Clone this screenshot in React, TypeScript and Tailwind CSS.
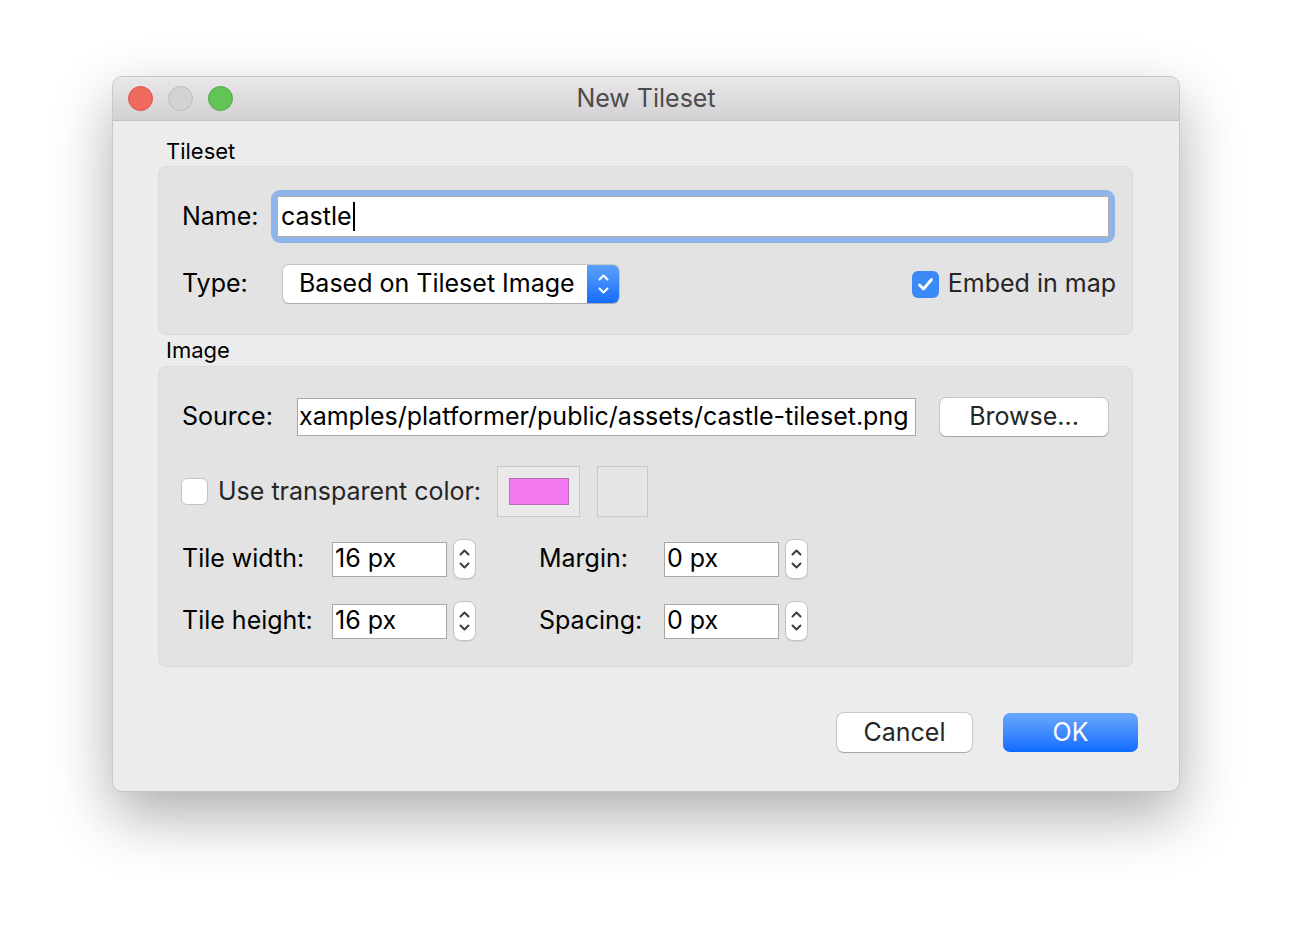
import React from "react";

const Chevrons = ({ color = "#ffffff" }: { color?: string }) => (
    <div className="flex flex-col items-center gap-[6px]">
        <svg width="11" height="7" viewBox="0 0 11 7">
            <path d="M1.5 5.5 L5.5 1.5 L9.5 5.5" fill="none" stroke={color} strokeWidth="2" strokeLinecap="round" strokeLinejoin="round" />
        </svg>
        <svg width="11" height="7" viewBox="0 0 11 7">
            <path d="M1.5 1.5 L5.5 5.5 L9.5 1.5" fill="none" stroke={color} strokeWidth="2" strokeLinecap="round" strokeLinejoin="round" />
        </svg>
    </div>
);

const Stepper = () => (
    <div className="w-[23px] h-[40px] rounded-[8px] bg-white border border-[#c4c4c4] shadow-[0_1px_1px_rgba(0,0,0,0.08)] flex items-center justify-center">
        <Chevrons color="#3c3c3c" />
    </div>
);

const SpinBox = ({ value }: { value: string }) => (
    <div className="flex items-center gap-[6px]">
        <div className="w-[115px] h-[35px] bg-white border border-[#a8a8a8] flex items-center pl-[2px] text-black">
            {value}
        </div>
        <Stepper />
    </div>
);

const Checkbox = ({ checked }: { checked?: boolean }) =>
    checked ? (
        <div className="w-[27px] h-[27px] rounded-[6px] bg-[#3a89f7] flex items-center justify-center">
            <svg width="17" height="15" viewBox="0 0 17 15">
                <path d="M2.5 8 L6.5 12 L14.5 2.5" fill="none" stroke="#ffffff" strokeWidth="2.8" strokeLinecap="round" strokeLinejoin="round" />
            </svg>
        </div>
    ) : (
        <div className="w-[27px] h-[27px] rounded-[6px] bg-white border border-[#c2c2c2]" />
    );

const GroupLabel = ({ text, h }: { text: string; h: string }) => (
    <div className={`${h} flex items-center pl-[8px] text-[22px] text-black`}>{text}</div>
);

export default function App() {
    return (
        <div className="w-[1292px] h-[940px] bg-white pt-[76px] pl-[112px] font-['Inter','Liberation_Sans',sans-serif] text-[25px]">
            <div className="w-[1068px] h-[716px] rounded-[10px] bg-[#ececec] border border-[#c8c8c8] shadow-[0_24px_60px_rgba(0,0,0,0.32)] overflow-hidden flex flex-col">
                {/* title bar */}
                <div className="relative h-[44px] shrink-0 bg-gradient-to-b from-[#e9e7e9] to-[#d3d1d3] border-b border-[#c3c3c3] flex items-center justify-center">
                    <div className="absolute left-[15px] top-[9px] flex gap-[15px]">
                        <div className="w-[25px] h-[25px] rounded-full bg-[#ee6a5f] border border-[#d9544b]" />
                        <div className="w-[25px] h-[25px] rounded-full bg-[#d3d3d3] border border-[#bdbdbd]" />
                        <div className="w-[25px] h-[25px] rounded-full bg-[#61c454] border border-[#4ea844]" />
                    </div>
                    <span className="text-[#4c4c4c] text-[25px]">New Tileset</span>
                </div>

                {/* body */}
                <div className="flex flex-col pl-[45px] pr-[46px] pt-[15px]">
                    <GroupLabel text="Tileset" h="h-[30px]" />
                    <div className="h-[169px] rounded-[8px] bg-[#e3e3e3] border border-[#dadada] pl-[23px] pr-[16px] pt-[23px] flex flex-col">
                        <div className="h-[53px] flex items-center">
                            <div className="w-[89px] text-black">Name:</div>
                            <div className="flex-1 h-[53px] rounded-[9px] bg-[#8eb4ea] p-[6px] mr-[1px]">
                                <div className="h-full bg-white border border-[#b3aeac] flex items-center pl-[3px] text-black">
                                    castle<span className="inline-block w-[2px] h-[29px] bg-black ml-[1px]" />
                                </div>
                            </div>
                        </div>
                        <div className="h-[38px] mt-[22px] flex items-center">
                            <div className="w-[101px] text-black">Type:</div>
                            <div className="w-[336px] h-[38px] rounded-[6px] bg-white shadow-[0_0_0_1px_rgba(0,0,0,0.12),0_1px_1px_rgba(0,0,0,0.15)] flex items-center overflow-hidden">
                                <div className="flex-1 pl-[16px] text-black">Based on Tileset Image</div>
                                <div className="w-[32px] h-full bg-gradient-to-b from-[#5aa0fb] to-[#126cfa] flex items-center justify-center">
                                    <Chevrons />
                                </div>
                            </div>
                            <div className="flex-1" />
                            <div className="flex items-center gap-[9px] text-[#262626]">
                                <Checkbox checked />
                                <span>Embed in map</span>
                            </div>
                        </div>
                    </div>

                    <GroupLabel text="Image" h="h-[31px]" />
                    <div className="h-[301px] rounded-[8px] bg-[#e3e3e3] border border-[#dadada] pl-[23px] pr-[24px] pt-[31px] flex flex-col">
                        <div className="h-[38px] flex items-center">
                            <div className="w-[115px] text-black">Source:</div>
                            <div className="w-[619px] h-[38px] bg-white border border-[#a8a8a8] flex items-center overflow-hidden pl-[1px] text-black whitespace-nowrap">
                                xamples/platformer/public/assets/castle-tileset.png
                            </div>
                            <div className="ml-[24px] w-[168px] h-[38px] rounded-[6px] bg-white shadow-[0_0_0_1px_rgba(0,0,0,0.12),0_1px_1px_rgba(0,0,0,0.18)] flex items-center justify-center text-[#262626]">
                                Browse...
                            </div>
                        </div>
                        <div className="h-[51px] mt-[30px] flex items-center">
                            <div className="-ml-[1px]">
                                <Checkbox />
                            </div>
                            <span className="ml-[10px] w-[279px] text-[#262626]">Use transparent color:</span>
                            <div className="w-[83px] h-[51px] bg-[#e9e9e9] border border-[#c8c8c8] flex items-center justify-center">
                                <div className="w-[60px] h-[27px] bg-[#f279ef] border border-[#b96cb6]" />
                            </div>
                            <div className="ml-[17px] w-[51px] h-[51px] bg-[#e6e6e6] border border-[#c8c8c8]" />
                        </div>
                        <div className="h-[40px] mt-[22px] flex items-center">
                            <div className="w-[150px] text-black">Tile width:</div>
                            <SpinBox value="16 px" />
                            <div className="ml-[63px] w-[125px] text-black">Margin:</div>
                            <SpinBox value="0 px" />
                        </div>
                        <div className="h-[40px] mt-[22px] flex items-center">
                            <div className="w-[150px] text-black">Tile height:</div>
                            <SpinBox value="16 px" />
                            <div className="ml-[63px] w-[125px] text-black">Spacing:</div>
                            <SpinBox value="0 px" />
                        </div>
                    </div>
                </div>

                {/* buttons */}
                <div className="mt-[46px] flex justify-end gap-[31px] pr-[41px]">
                    <div className="w-[135px] h-[39px] rounded-[7px] bg-white shadow-[0_0_0_1px_rgba(0,0,0,0.14),0_1px_1px_rgba(0,0,0,0.18)] flex items-center justify-center text-[#262626]">
                        Cancel
                    </div>
                    <div className="w-[135px] h-[39px] rounded-[7px] bg-gradient-to-b from-[#69a7fc] to-[#0a6bff] flex items-center justify-center text-white">
                        OK
                    </div>
                </div>
            </div>
        </div>
    );
}
